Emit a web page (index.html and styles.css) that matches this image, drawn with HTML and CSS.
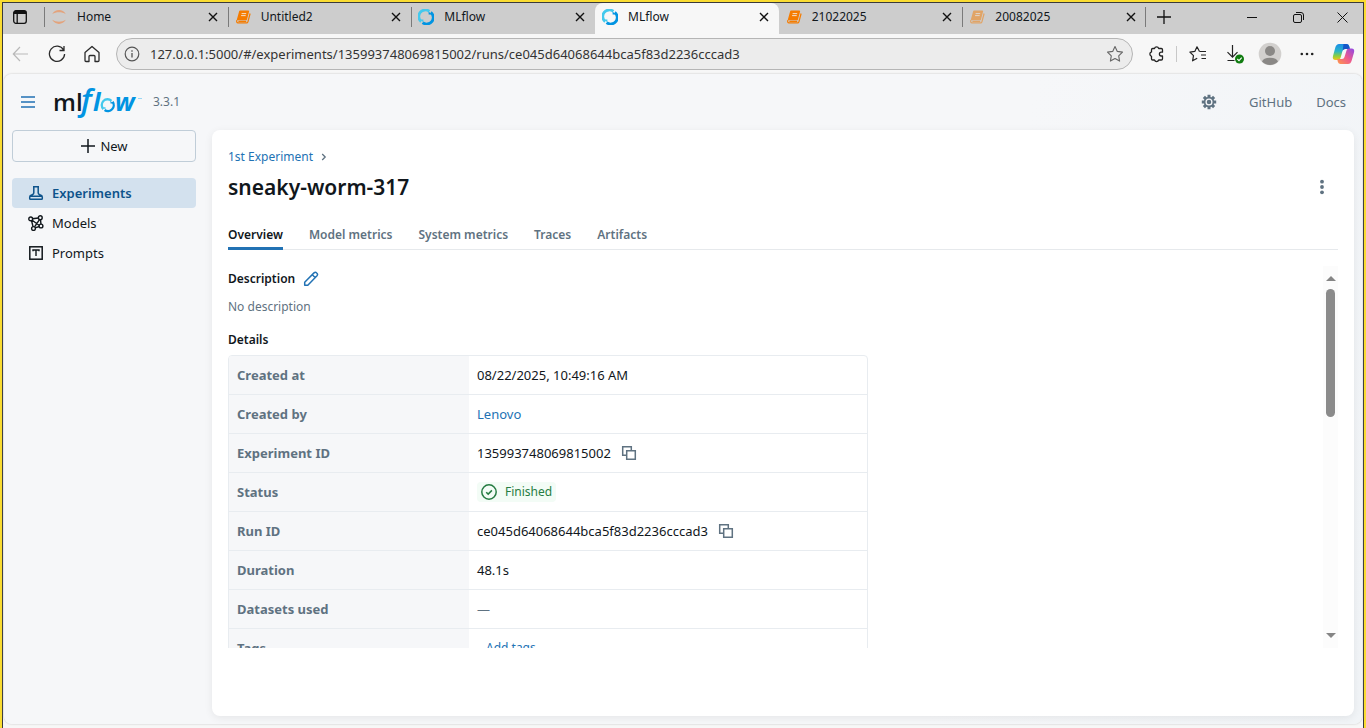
FILE: index.html
```html
<!DOCTYPE html>
<html lang="en">
<head>
<meta charset="utf-8">
<title>MLflow</title>
<link rel="stylesheet" href="styles.css">
</head>
<body>
<svg class="defs" width="0" height="0" aria-hidden="true">
  <defs>
    <linearGradient id="g-cop1" x1="0" y1="0" x2="0" y2="1"><stop offset="0" stop-color="#1a8ee8"/><stop offset="0.45" stop-color="#2bb5c8"/><stop offset="0.75" stop-color="#8ccf3f"/><stop offset="1" stop-color="#f5c518"/></linearGradient>
    <linearGradient id="g-cop2" x1="1" y1="0" x2="0" y2="1"><stop offset="0" stop-color="#8c48e8"/><stop offset="0.5" stop-color="#ee5a8e"/><stop offset="1" stop-color="#ff9a48"/></linearGradient>
    <symbol id="close" viewBox="0 0 10 10"><path d="M1 1l8 8M9 1L1 9" fill="none" stroke="#111" stroke-width="1.4"/></symbol>
    <symbol id="ring" viewBox="0 0 16 16">
      <path d="M3.200 12.600A6.500 6.500 0 0 1 11.400 2.400" fill="none" stroke="#43c9ed" stroke-width="2.800"/>
      <path d="M12.800 3.400A6.500 6.500 0 0 1 4.600 13.600" fill="none" stroke="#0194e2" stroke-width="2.800"/>
      <path d="M2.400 10.600h3v2.800z" fill="#43c9ed"/><path d="M13.600 5.400h-3V2.600z" fill="#0194e2"/>
    </symbol>
    <symbol id="book" viewBox="0 0 16 16">
      <path d="M5 2.200h8.300L11.200 10.400H2.700z" fill="#f57c00" stroke="#f57c00" stroke-width="1.600" stroke-linejoin="round"/>
      <path d="M2 11c-.8 1.600-.2 2.900 1 2.900h8.600c.7 0 1.100-.4 1.300-1.100l2.200-8.300M3.400 12.400h7.800" fill="none" stroke="#f57c00" stroke-width="1.200"/>
      <path d="M6.600 4.600h4.600M6.100 6.600h4.600" stroke="#f6dfc6" stroke-width="1"/>
    </symbol>
    <symbol id="copy" viewBox="0 0 16 16"><path d="M5 10.300H1.700V1.700h8.600V5M5.700 5.700h8.600v8.600H5.700z" fill="none" stroke="#5f7281" stroke-width="1.500"/></symbol>
  </defs>
</svg>
<div class="window">
  <header class="tabstrip">
    <button class="tab-menu" aria-label="Tab actions"><svg width="16" height="16" viewBox="0 0 16 16"><rect x="1.700" y="1.700" width="12.600" height="12.600" rx="2.200" fill="none" stroke="#111" stroke-width="1.300"/><path d="M1.700 5V3.500q0-1.800 1.800-1.800h9q1.800 0 1.800 1.800V5z" fill="#111"/><path d="M5.200 4v10" stroke="#111" stroke-width="1.300"/></svg></button>
    <div class="tabs">
      <div class="tab"><svg class="fav" viewBox="0 0 16 16"><path d="M1.200 5.200C4-.3 12-.3 14.800 5.200 11 2.600 5 2.600 1.200 5.200zM1.200 10.800c2.800 5.500 10.800 5.500 13.600 0-3.800 2.600-9.800 2.600-13.600 0z" fill="#e3a37c"/></svg><span class="tab-name">Home</span><button class="x" aria-label="Close Home"><svg><use href="#close"/></svg></button></div>
      <div class="tab"><svg class="fav"><use href="#book"/></svg><span class="tab-name">Untitled2</span><button class="x" aria-label="Close Untitled2"><svg><use href="#close"/></svg></button></div>
      <div class="tab"><svg class="fav"><use href="#ring"/></svg><span class="tab-name">MLflow</span><button class="x" aria-label="Close MLflow"><svg><use href="#close"/></svg></button></div>
      <div class="tab active"><svg class="fav"><use href="#ring"/></svg><span class="tab-name">MLflow</span><button class="x" aria-label="Close MLflow"><svg><use href="#close"/></svg></button></div>
      <div class="tab after"><svg class="fav"><use href="#book"/></svg><span class="tab-name">21022025</span><button class="x" aria-label="Close 21022025"><svg><use href="#close"/></svg></button></div>
      <div class="tab"><svg class="fav dim"><use href="#book"/></svg><span class="tab-name">20082025</span><button class="x" aria-label="Close 20082025"><svg><use href="#close"/></svg></button></div>
    </div>
    <button class="new-tab" aria-label="New tab"><svg width="14" height="14" viewBox="0 0 14 14"><path d="M7 0v14M0 7h14" stroke="#111" stroke-width="1.300"/></svg></button>
    <div class="win-controls">
      <button aria-label="Minimize"><svg width="11" height="11" viewBox="0 0 11 11"><path d="M0 5.500h10" stroke="#111"/></svg></button>
      <button aria-label="Restore"><svg width="11" height="11" viewBox="0 0 11 11"><rect x=".5" y="2.500" width="8" height="8" rx="1.500" fill="none" stroke="#111"/><path d="M3 .5h5q2.500 0 2.500 2.500v5" fill="none" stroke="#111"/></svg></button>
      <button aria-label="Close window"><svg width="11" height="11" viewBox="0 0 11 11"><path d="M.5.5l10 10M10.500.5l-10 10" stroke="#111"/></svg></button>
    </div>
  </header>

  <div class="toolbar">
    <div class="nav-buttons">
      <button aria-label="Back"><svg width="18" height="16" viewBox="0 0 18 16"><path d="M16 8H1.500M8 1L1.300 8 8 15" fill="none" stroke="#b9b9b9" stroke-width="1.200"/></svg></button>
      <button aria-label="Refresh"><svg width="18" height="18" viewBox="0 0 18 18"><path d="M15.600 5A7.600 7.600 0 1 0 16.600 9M16 1v4.500h-4.500" fill="none" stroke="#2b2b2b" stroke-width="1.300"/></svg></button>
      <button aria-label="Home"><svg width="16" height="18" viewBox="0 0 16 18"><path d="M1 7.500L8 1.500l7 6v8q0 1-1 1h-3v-5q0-1-1-1H6q-1 0-1 1v5H2q-1 0-1-1z" fill="none" stroke="#2b2b2b" stroke-width="1.300" stroke-linejoin="round"/></svg></button>
    </div>
    <form class="address">
      <svg width="16" height="16" viewBox="0 0 16 16"><circle cx="8" cy="8" r="6.800" fill="none" stroke="#555" stroke-width="1.200"/><path d="M8 7v4.500M8 4.300v1.400" stroke="#555" stroke-width="1.300"/></svg>
      <input type="text" aria-label="Address" value="127.0.0.1:5000/#/experiments/135993748069815002/runs/ce045d64068644bca5f83d2236cccad3">
      <button type="button" aria-label="Favorite"><svg width="18" height="18" viewBox="0 0 18 18"><path d="M9 1.500l2.300 4.900 5.200.7-3.800 3.700.9 5.300L9 13.500l-4.600 2.600.9-5.300L1.500 7.100l5.200-.7z" fill="none" stroke="#666" stroke-width="1.100" stroke-linejoin="round"/></svg></button>
    </form>
    <div class="tools">
      <button aria-label="Extensions"><svg width="16" height="18" viewBox="0 0 16 18"><path d="M3.500 4.700q0-1.200 1.200-1.200h1.800a2.200 2.200 0 0 1 4.200 0h2.600q1.200 0 1.200 1.200v2.500h-1.200a1.900 1.900 0 0 0 0 3.800h1.200v2.800q0 1.200-1.200 1.200h-2.600a2.200 2.200 0 0 1-4.200 0H4.700q-1.200 0-1.200-1.200v-2.500a2.300 2.300 0 0 1 0-4.400z" fill="none" stroke="#222" stroke-width="1.300" stroke-linejoin="round"/></svg></button>
      <span class="divider"></span>
      <button aria-label="Favorites"><svg width="18" height="18" viewBox="0 0 18 18"><path d="M10.500 6.500H17M12 10h5M12.500 13.500H17" stroke="#222" stroke-width="1.200"/><path d="M10.500 6.500L8 1.800 5.800 6.400l-4.900.7 3.600 3.600-.9 5.100 4.600-2.500" fill="none" stroke="#222" stroke-width="1.200" stroke-linejoin="round"/></svg></button>
      <button aria-label="Downloads"><svg width="19" height="20" viewBox="0 0 19 20"><path d="M6.500 1v12M1.500 8.200l5 5 5-5M1.500 16.500h7" fill="none" stroke="#222" stroke-width="1.200"/><circle cx="13.500" cy="15" r="4.500" fill="#107c10"/><path d="M11.300 15l1.700 1.600 2.700-3" fill="none" stroke="#fff" stroke-width="1.100"/></svg></button>
      <button aria-label="Profile"><svg width="24" height="24" viewBox="0 0 24 24"><circle cx="12" cy="12" r="11.300" fill="#d2d0ce"/><circle cx="12" cy="9" r="5" fill="#8a8886"/><path d="M4 19.600q1.200-3.800 8-3.800t8 3.800q-3.200 3.400-8 3.400t-8-3.400z" fill="#8a8886"/></svg></button>
      <button aria-label="Settings and more"><svg width="14" height="4" viewBox="0 0 14 4"><circle cx="1.800" cy="2" r="1.300" fill="#222"/><circle cx="7" cy="2" r="1.300" fill="#222"/><circle cx="12.200" cy="2" r="1.300" fill="#222"/></svg></button>
      <button aria-label="Copilot"><svg width="23" height="22" viewBox="0 0 23 22"><path d="M9 1h5.500q2 0 2.600 2l.8 3H13q-2 0-2.500 2L8.500 15q-.6 2-2.500 2H3.500Q0 17 1 13l2.300-8.500Q4.300 1 7 1z" fill="url(#g-cop1)"/><path d="M11.500 1h3q2 0 2.600 2l.8 3H13q-1.500 0-2.300 1.500z" fill="#1557c8"/><path d="M14 21H8.500q-2 0-2.600-2L5.200 16H10q2 0 2.500-2l2-6.600q.6-1.900 2.500-1.900h2.500Q23 5.500 22 9.500l-2.300 8Q18.700 21 16 21z" fill="url(#g-cop2)"/></svg></button>
    </div>
  </div>

  <div class="page">
    <header class="app-header">
      <button class="burger" aria-label="Toggle sidebar"><svg width="16" height="16" viewBox="0 0 16 16"><path d="M1 3h14M1 8h14M1 13h14" stroke="#2272b4" stroke-width="1.600"/></svg></button>
      <a class="logo" href="#" aria-label="mlflow"><svg width="90" height="36" viewBox="0 0 90 36">
        <text x="-1" y="27" class="logo-ml">ml</text>
        <text x="27" y="27" class="logo-f">f</text>
        <text x="39" y="27" class="logo-l">l</text>
        <path d="M49.400 25.100A5.800 5.800 0 0 1 57.500 16.800" fill="none" stroke="#43c9ed" stroke-width="2.300"/><path d="M58.600 17.800A5.800 5.800 0 0 1 50.600 26" fill="none" stroke="#0194e2" stroke-width="2.300"/><path d="M49 23.300h2.500v2.500z" fill="#43c9ed"/><path d="M59 19.600h-2.500v-2.500z" fill="#0194e2"/>
        <text x="61" y="27" class="logo-w">w</text>
        <path d="M84 14.500h4" stroke="#9bd6f3" stroke-width="1"/>
      </svg></a>
      <span class="version">3.3.1</span>
      <button class="gear" aria-label="Settings"><svg width="16" height="16" viewBox="0 0 16 16"><g stroke="#5f7281" stroke-width="3"><path d="M8 .8v14.400M.8 8h14.400M2.900 2.900l10.200 10.200M13.100 2.900L2.900 13.100"/></g><circle cx="8" cy="8" r="5.200" fill="#5f7281"/><circle cx="8" cy="8" r="2.900" fill="#5f7281" stroke="#f6f7f9" stroke-width="1.300"/></svg></button>
      <a class="top-link" href="#">GitHub</a>
      <a class="top-link" href="#">Docs</a>
    </header>

    <div class="body">
      <nav class="sidebar">
        <button class="new"><svg width="16" height="16" viewBox="0 0 16 16"><path d="M8 1v14M1 8h14" stroke="#11171c" stroke-width="1.500"/></svg>New</button>
        <a class="item current" href="#"><svg width="16" height="16" viewBox="0 0 16 16"><path d="M5 1.700h6M5.800 1.700v6q0 1.300-1.200 1.800L3 10.300q-1.300.6-1.300 2v1.200q0 .8.800.8h11q.8 0 .8-.8v-1.200q0-1.400-1.300-2l-1.600-.8q-1.200-.5-1.200-1.800v-6M2 11.300h12" fill="none" stroke="#0e538b" stroke-width="1.500"/></svg>Experiments</a>
        <a class="item" href="#"><svg width="16" height="16" viewBox="0 0 16 16"><g fill="none" stroke="#11171c" stroke-width="1.400"><path d="M4.300 3.800l6.200-.8M3.500 5.500l1.600 6.300M4.200 5.200l6.800 5M11.500 4.600L6.500 11.800M12.500 4.600l.5 5M7 12.800l4.400-1.300"/><g fill="#f6f7f9"><circle cx="2.700" cy="3.900" r="1.900"/><circle cx="12.300" cy="2.700" r="1.900"/><circle cx="13" cy="11" r="1.900"/><circle cx="5.500" cy="13.500" r="1.900"/></g></g></svg>Models</a>
        <a class="item" href="#"><svg width="16" height="16" viewBox="0 0 16 16"><rect x="1.800" y="1.800" width="12.400" height="12.400" fill="none" stroke="#11171c" stroke-width="1.500"/><path d="M5 6.200V5h6v1.200M8 5v6" fill="none" stroke="#11171c" stroke-width="1.400"/></svg>Prompts</a>
      </nav>

      <main class="card">
        <div class="crumbs"><a href="#">1st Experiment</a><svg width="6" height="8" viewBox="0 0 6 8"><path d="M1.200 1l3 3-3 3" fill="none" stroke="#5f7281" stroke-width="1.300"/></svg></div>
        <div class="title-row"><h1>sneaky-worm-317</h1><button aria-label="More"><svg width="16" height="16" viewBox="0 0 16 16" fill="#5f7281"><circle cx="8" cy="2.700" r="1.900"/><circle cx="8" cy="8" r="1.900"/><circle cx="8" cy="13.300" r="1.900"/></svg></button></div>
        <div class="subtabs" role="tablist">
          <button role="tab" aria-selected="true" class="on">Overview</button><button role="tab">Model metrics</button><button role="tab">System metrics</button><button role="tab">Traces</button><button role="tab">Artifacts</button>
        </div>
        <div class="scroll-area">
          <div class="content">
            <h2>Description <button aria-label="Edit description"><svg width="16" height="16" viewBox="0 0 16 16"><path d="M1.700 14.300v-3.100L11 1.900q1.400-1.200 2.700.1 1.500 1.400.3 2.800l-9.200 9.500zM9.300 3.700l3 3" fill="none" stroke="#2272b4" stroke-width="1.500" stroke-linejoin="round"/></svg></button></h2>
            <p class="empty">No description</p>
            <h2 class="details-head">Details</h2>
            <div class="table-wrap"><table>
              <tr><th scope="row">Created at</th><td>08/22/2025, 10:49:16 AM</td></tr>
              <tr><th scope="row">Created by</th><td><a href="#">Lenovo</a></td></tr>
              <tr><th scope="row">Experiment ID</th><td><div class="copyable">135993748069815002<button aria-label="Copy experiment ID"><svg width="16" height="16"><use href="#copy"/></svg></button></div></td></tr>
              <tr><th scope="row">Status</th><td><div class="status"><svg width="16" height="16" viewBox="0 0 16 16"><circle cx="8" cy="8" r="7.200" fill="none" stroke="#277c43" stroke-width="1.500"/><path d="M5.200 8.200l2 1.900 3.700-3.700" fill="none" stroke="#277c43" stroke-width="1.500"/></svg>Finished</div></td></tr>
              <tr><th scope="row">Run ID</th><td><div class="copyable">ce045d64068644bca5f83d2236cccad3<button aria-label="Copy run ID"><svg width="16" height="16"><use href="#copy"/></svg></button></div></td></tr>
              <tr><th scope="row">Duration</th><td>48.1s</td></tr>
              <tr><th scope="row">Datasets used</th><td class="muted">—</td></tr>
              <tr><th scope="row">Tags</th><td><button class="add-tags">Add tags</button></td></tr>
            </table></div>
          </div>
          <div class="scrollbar" aria-hidden="true">
            <svg width="10" height="5" viewBox="0 0 10 5"><path d="M5 0l5 5H0z" fill="#858585"/></svg>
            <div class="track"><div class="thumb"></div></div>
            <svg width="10" height="5" viewBox="0 0 10 5"><path d="M5 5l5-5H0z" fill="#858585"/></svg>
          </div>
        </div>
      </main>
    </div>
  </div>
</div>
</body>
</html>
```
FILE: styles.css
```css
* { box-sizing: border-box; }
body {
  margin: 0;
  font-family: "Noto Sans", "Open Sans", sans-serif;
  font-size: 13px;
  line-height: 20px;
  color: #11171c;
}
button {
  display: flex;
  align-items: center;
  justify-content: center;
  padding: 0;
  border: 0;
  background: none;
  font: inherit;
  color: inherit;
}
a { color: #2272b4; text-decoration: none; }
svg { display: block; flex: none; }
.defs { position: absolute; }

.window {
  display: flex;
  flex-direction: column;
  height: 100vh;
  padding: 1px 1px 4px;
  border: 2px solid #fadc32;
  border-bottom: 0;
  background: #f7f7f7;
  box-shadow: inset 1px 1px #3a3a3a, inset -1px 0 #3a3a3a;
}

/* Browser tab strip */
.tabstrip {
  display: flex;
  height: 31px;
  flex: none;
  background: #cdcdcd;
  font-size: 12px;
}
.tab-menu { width: 41px; padding-right: 8px; padding-bottom: 4px; }
.tabs { display: flex; flex: 0 1 1102px; min-width: 0; }
.tab {
  display: flex;
  flex: 1;
  min-width: 0;
  align-items: center;
  padding: 0 10px 4px 7px;
  background: linear-gradient(#7a7a7a, #7a7a7a) 0 4px / 1px 20px no-repeat;
}
.tabs .tab:last-child {
  background:
    linear-gradient(#7a7a7a, #7a7a7a) 0 4px / 1px 20px no-repeat,
    linear-gradient(#7a7a7a, #7a7a7a) 100% 4px / 1px 20px no-repeat;
}
.tab.active { background: #f7f7f7; border-radius: 8px 8px 0 0; }
.tab.after { background: none; }
.fav { width: 16px; height: 16px; margin-right: 10px; }
.dim { opacity: 0.5; }
.tab-name { flex: 1; overflow: hidden; white-space: nowrap; }
.x svg { width: 10px; height: 10px; }
.new-tab { width: 36px; padding-bottom: 4px; }
.win-controls { display: flex; margin-left: auto; padding-bottom: 3px; }
.win-controls button { width: 46px; }
.win-controls button:last-child { width: 42px; }

/* Address row */
.toolbar { display: flex; flex: none; align-items: center; height: 40px; padding: 0 8px 0 9px; }
.nav-buttons { display: flex; gap: 18px; width: 104px; }
.address {
  display: flex;
  flex: 1;
  align-items: center;
  gap: 10px;
  height: 32px;
  padding: 0 8px 0 7px;
  border: 1px solid #b5b5b5;
  border-radius: 16px;
  background: #ececec;
}
.address input {
  flex: 1;
  min-width: 0;
  padding: 0;
  border: 0;
  background: none;
  font: inherit;
  color: #333;
}
.tools { display: flex; align-items: center; margin-left: 15px; }
.divider { width: 1px; height: 16px; margin: 0 -6px 0 25px; background: #c8c8c8; }
.tools button + button { margin-left: 18px; }
.tools .divider { margin: 0 0 0 25px; }
.tools .divider { margin: 0 12px; }
.tools .divider + button + button { margin-left: 19px; }
.tools button:nth-of-type(4) { margin-left: 13px; }

/* MLflow */
.page {
  display: flex;
  flex: 1;
  flex-direction: column;
  min-height: 0;
  margin: 0 1px;
  border-radius: 8px;
  background: linear-gradient(100deg, #f6f7f9 70%, #f1f4f7);
  box-shadow: 0 0 2px #bbb;
}
.app-header { display: flex; flex: none; align-items: center; height: 56px; padding: 0 16px; color: #5f7281; }
.logo { margin-left: 18px; }
.logo svg { overflow: visible; }
.logo text { font-family: "Open Sans", "Noto Sans", sans-serif; fill: #0194e2; }
.logo .logo-ml { fill: #11171c; font-size: 24px; font-weight: 600; }
.logo .logo-f { font-size: 31px; font-style: italic; font-weight: 600; }
.logo .logo-l { font-size: 25px; font-style: italic; font-weight: 700; }
.logo .logo-w { font-size: 25px; font-style: italic; font-weight: 700; }
.version { margin-left: 9px; font-size: 12px; }
.gear { margin-left: auto; margin-right: 8px; }
.top-link { margin-left: 24px; color: #5f7281; }

.body { display: flex; flex: 1; gap: 16px; min-height: 0; padding: 0 8px; }
.sidebar { width: 184px; flex: none; }
.new {
  width: 100%;
  height: 32px;
  gap: 4px;
  margin-bottom: 16px;
  border: 1px solid #c0cdd8;
  border-radius: 4px;
}
.item {
  display: flex;
  align-items: center;
  gap: 8px;
  height: 30px;
  padding: 0 16px;
  border-radius: 4px;
  color: #11171c;
}
.item.current { background: #d3e1ee; color: #0e538b; font-weight: 600; }

.card {
  display: flex;
  flex: 1;
  flex-direction: column;
  min-width: 0;
  margin-bottom: 8px;
  padding: 17px 16px 68px;
  border-radius: 8px;
  background: #fff;
  box-shadow: 0 2px 8px #00000012;
}
.crumbs { display: flex; align-items: center; gap: 8px; font-size: 12px; }
.title-row { display: flex; align-items: center; justify-content: space-between; height: 40px; }
.title-row button { margin-right: 8px; }
h1 { margin: 0; font-size: 21px; line-height: 28px; font-weight: 600; }
.subtabs { display: flex; flex: none; gap: 26px; height: 43px; border-bottom: 1px solid #e6e9ec; }
.subtabs button {
  height: 43px;
  padding-top: 15px;
  border-bottom: 3px solid transparent;
  color: #5f7281;
  font-size: 12px;
  font-weight: 600;
}
.subtabs .on { border-color: #2272b4; color: #11171c; }

.scroll-area { display: flex; flex: 1; min-height: 0; margin-top: 16px; }
.content { flex: 1; overflow: hidden; padding-top: 3px; }
h2 { display: flex; align-items: center; gap: 8px; margin: 0; font-size: 12px; line-height: 20px; font-weight: 600; }
.empty { margin: 8px 0 0; font-size: 12px; color: #5f7281; }
.details-head { margin: 13px 0 5px; }
.table-wrap { max-width: 640px; border: 1px solid #e8ecf0; border-radius: 4px; overflow: hidden; }
table { width: 100%; border-spacing: 0; }
th, td { height: 39px; padding: 0 8px; border-bottom: 1px solid #e8ecf0; text-align: left; }
th { width: 240px; background: #f6f7f9; color: #5f7281; font-weight: 700; }
.copyable { display: flex; align-items: center; gap: 10px; }
.status {
  display: flex;
  align-items: center;
  gap: 8px;
  width: fit-content;
  padding: 0 4px;
  border-radius: 4px;
  background: #f3fcf6;
  color: #277c43;
  font-size: 12px;
}
.muted { color: #5f7281; }
.add-tags { padding-left: 9px; color: #2272b4; font-size: 12px; }

.scrollbar {
  display: flex;
  flex-direction: column;
  align-items: center;
  width: 15px;
  padding: 10px 0;
  background: #fcfcfc;
}
.track { flex: 1; width: 9px; margin: 8px 0; }
.thumb { height: 38%; border-radius: 5px; background: #8b8b8b; }
```
